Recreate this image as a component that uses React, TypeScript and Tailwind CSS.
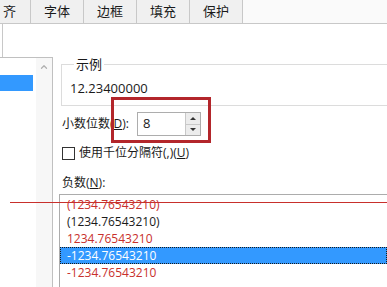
import { ChevronUp } from "lucide-react";

const tabs = ["字体", "边框", "填充", "保护"];

const negatives = [
  { text: "(1234.76543210)", red: true },
  { text: "(1234.76543210)", red: false },
  { text: "1234.76543210", red: true },
  { text: "-1234.76543210", red: false, selected: true },
  { text: "-1234.76543210", red: true },
];

export default function App() {
  return (
    <div
      className="relative w-[387px] h-[287px] overflow-hidden bg-white text-[12px] text-[#1a1a1a]"
      style={{ fontFamily: '"Open Sans", "Noto Sans CJK SC", sans-serif' }}
    >
      {/* tab strip */}
      <div className="flex h-[24px] border-b border-[#c8c8c8] text-[13px]">
        <div className="w-[31px] flex items-center pl-[3px] bg-[#f0f0f0] border-r border-[#c8c8c8]">齐</div>
        {tabs.map((t) => (
          <div
            key={t}
            className="w-[53px] flex items-center justify-center bg-[#f0f0f0] border-r border-[#c8c8c8]"
          >
            {t}
          </div>
        ))}
        <div className="flex-1 bg-[#fafafa]" />
      </div>

      <div className="flex">
        {/* left category list */}
        <div className="w-[53px] shrink-0 flex flex-col">
          <div className="h-[33px] ml-[2px] border-l border-[#c8c8c8]" />
          <div className="h-[230px] flex border-t border-r border-[#c0c0c0]">
            <div className="w-[36px] pt-[17px]">
              <div className="w-[33px] h-[16px] bg-[#3399ff]" />
            </div>
            <div className="flex-1 flex justify-center pt-[4px] bg-[#f7f7f7]">
              <ChevronUp className="w-[10px] h-[10px] text-[#b0b0b0]" strokeWidth={3} />
            </div>
          </div>
        </div>

        {/* right settings */}
        <div className="flex-1 flex flex-col pl-[6px]">
          <fieldset className="mt-[32px] ml-[2px] h-[50px] border-t border-l border-b border-[#dcdcdc] pl-[8px]">
            <legend className="ml-[4px] px-[2px] leading-[16px] text-[13px]">示例</legend>
            <div className="mt-[8px] leading-[16px] text-[13px]">12.23400000</div>
          </fieldset>

          <div className="mt-[6px] flex items-center h-[24px] ml-[3px]">
            <span className="w-[75px]">小数位数(<span className="underline">D</span>):</span>
            <div className="w-[64px] h-[24px] flex border border-[#adadad] bg-white">
              <div className="flex-1 pl-[5px] flex items-center text-[13px]">8</div>
              <div className="w-[15px] flex flex-col">
                <div className="flex-1 flex items-center justify-center bg-[#ececec] border-l border-b border-[#c8c8c8]">
                  <div className="w-0 h-0 border-l-[3px] border-r-[3px] border-b-[3px] border-l-transparent border-r-transparent border-b-[#333]" />
                </div>
                <div className="flex-1 flex items-center justify-center bg-[#ececec] border-l border-[#c8c8c8]">
                  <div className="w-0 h-0 border-l-[3px] border-r-[3px] border-t-[3px] border-l-transparent border-r-transparent border-t-[#333]" />
                </div>
              </div>
            </div>
          </div>

          <div className="mt-[10px] flex items-center h-[14px] ml-[3px]">
            <div className="w-[13px] h-[13px] border border-[#333] bg-white" />
            <span className="ml-[4px]">
              使用千位分隔符(,)(<span className="underline">U</span>)
            </span>
          </div>

          <div className="mt-[15px] ml-[3px] leading-[16px]">
            负数(<span className="underline">N</span>):
          </div>

          <div className="mt-[3px] flex-1 border-t border-l border-[#acacac] pt-[1px]">
            {negatives.map((n, i) => (
              <div
                key={i}
                className={
                  n.selected
                    ? "h-[17px] flex items-center pl-[6px] bg-[#3399ff] text-white border border-dotted border-[#1a1a1a]"
                    : n.red
                    ? "h-[17px] flex items-center pl-[7px] text-[#c8302c]"
                    : "h-[17px] flex items-center pl-[7px] text-[#1a1a1a]"
                }
              >
                {n.text}
              </div>
            ))}
          </div>
        </div>
      </div>

      {/* red annotation marks */}
      <div className="absolute left-[111px] top-[97px] w-[100px] h-[46px] border-[3px] border-[#b3262b]" />
      <div className="absolute left-[10px] right-0 top-[202px] h-px bg-[#c8302c]" />
    </div>
  );
}
